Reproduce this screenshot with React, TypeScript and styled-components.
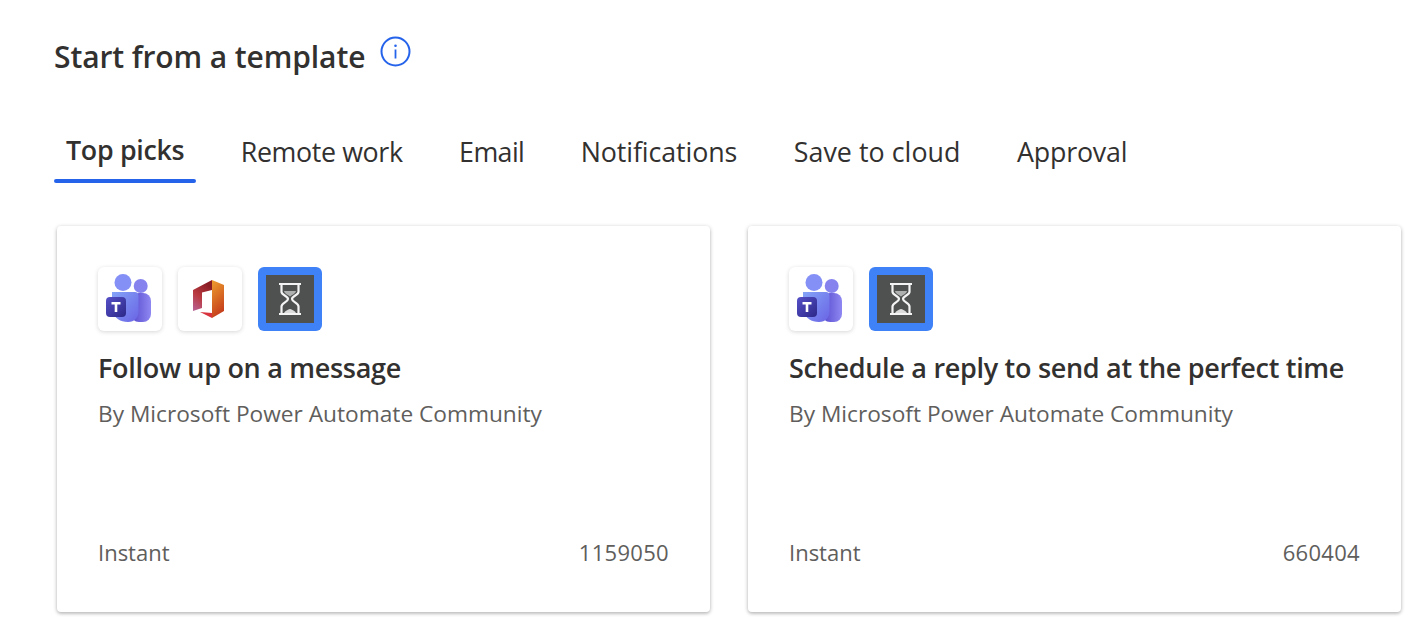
import React from 'react';
import styled, { createGlobalStyle } from 'styled-components';

const GlobalStyle = createGlobalStyle`
  html, body {
    margin: 0;
    padding: 0;
    background: #ffffff;
    overflow: hidden;
  }
  body {
    font-family: "Open Sans", "Noto Sans", "Liberation Sans", sans-serif;
  }
`;

const Page = styled.div`
  width: 1426px;
  height: 636px;
  box-sizing: border-box;
  padding: 32px 0 0 54px;
  overflow: hidden;
`;

const Heading = styled.div`
  display: flex;
  align-items: flex-start;
  gap: 15px;
  height: 52px;
`;

const Title = styled.h1`
  margin: 0;
  font-size: 30px;
  line-height: 50px;
  font-weight: 600;
  color: #323130;
  letter-spacing: -0.1px;
`;

const InfoButton = styled.span`
  display: block;
  width: 31px;
  height: 31px;
  margin-top: 4px;
  color: #2563eb;
`;

const TabRow = styled.div`
  display: flex;
  gap: 32.5px;
  margin-top: 40px;
`;

const Tab = styled.div<{ $active?: boolean; $tracking: number }>`
  position: relative;
  padding: 0 12px;
  height: 59px;
  font-size: 26.8px;
  line-height: ${(p) => (p.$active ? 52 : 56)}px;
  font-weight: ${(p) => (p.$active ? 600 : 400)};
  color: #323130;
  letter-spacing: ${(p) => p.$tracking}px;

  &::after {
    content: '';
    display: ${(p) => (p.$active ? 'block' : 'none')};
    position: absolute;
    left: 0;
    right: 0;
    bottom: 0;
    height: 4px;
    border-radius: 2px;
    background: #2563eb;
  }
`;

const CardRow = styled.div`
  display: flex;
  gap: 38px;
  margin: 43px 0 0 3px;
`;

const Card = styled.div`
  display: flex;
  flex-direction: column;
  box-sizing: border-box;
  width: 653px;
  height: 386px;
  padding: 41px 41px 44px;
  background: #ffffff;
  border-radius: 4px;
  box-shadow: 0 1px 4px rgba(0, 0, 0, 0.24), 0 2px 3px rgba(0, 0, 0, 0.1);
`;

const IconRow = styled.div`
  display: flex;
  gap: 16px;
`;

const IconTile = styled.div<{ $bg?: string }>`
  display: flex;
  align-items: center;
  justify-content: center;
  width: 64px;
  height: 64px;
  border-radius: 6px;
  background: ${(p) => p.$bg || '#ffffff'};
  box-shadow: ${(p) => (p.$bg ? 'none' : '0 1px 4px rgba(0, 0, 0, 0.16)')};
`;

const CardTitle = styled.div`
  margin-top: 18px;
  font-size: 27px;
  line-height: 38px;
  font-weight: 600;
  color: #323130;
  letter-spacing: -0.3px;
  white-space: nowrap;
`;

const Author = styled.div`
  margin-top: 11px;
  font-size: 22.7px;
  line-height: 32px;
  color: #605e5c;
  white-space: nowrap;
`;

const CardFooter = styled.div`
  display: flex;
  justify-content: space-between;
  margin-top: auto;
  font-size: 22px;
  line-height: 32px;
  color: #605e5c;
`;

const RunCount = styled.span`
  letter-spacing: 0.3px;
`;

const InfoIcon = () => (
  <svg viewBox="0 0 31 31" width="31" height="31" fill="none" stroke="currentColor">
    <circle cx="15.5" cy="15.5" r="14" strokeWidth="2" />
    <circle cx="15.5" cy="9.8" r="1.3" fill="currentColor" stroke="none" />
    <path d="M15.5 13.5v9" strokeWidth="1.8" />
  </svg>
);

const TeamsIcon = () => (
  <svg viewBox="0 0 64 64" width="64" height="64">
    <defs>
      <linearGradient id="teamsBack" x1="0" y1="0" x2="1" y2="0">
        <stop offset="0" stopColor="#5548cc" />
        <stop offset="1" stopColor="#8f88f2" />
      </linearGradient>
      <linearGradient id="teamsFront" x1="0" y1="0" x2="1" y2="1">
        <stop offset="0" stopColor="#84a4f8" />
        <stop offset="1" stopColor="#6a64e4" />
      </linearGradient>
      <linearGradient id="teamsBadge" x1="0" y1="0" x2="1" y2="1">
        <stop offset="0" stopColor="#5650c8" />
        <stop offset="1" stopColor="#2c2888" />
      </linearGradient>
    </defs>
    <circle cx="42.700" cy="19" r="7" fill="#8683ef" />
    <rect x="33" y="26" width="20" height="29" rx="8" fill="url(#teamsBack)" />
    <circle cx="25" cy="15.500" r="8.500" fill="#8490f5" />
    <path d="M14 25h23c2 0 3.500 1.500 3.500 4v16c0 5-4 10-10.500 10-8 0-13-4-16-10z" fill="url(#teamsFront)" />
    <rect x="8" y="30" width="20" height="20" rx="4" fill="url(#teamsBadge)" />
    <path d="M13.500 35h9v2.500h-3.200V45h-2.600v-7.500h-3.200z" fill="#ffffff" />
  </svg>
);

const OfficeIcon = () => (
  <svg viewBox="0 0 64 64" width="64" height="64">
    <defs>
      <linearGradient id="officeLeft" x1="0" y1="1" x2="0.5" y2="0">
        <stop offset="0" stopColor="#b8649a" />
        <stop offset="0.5" stopColor="#b93a40" />
        <stop offset="1" stopColor="#8a1c24" />
      </linearGradient>
      <linearGradient id="officeRight" x1="0" y1="0" x2="0.3" y2="1">
        <stop offset="0" stopColor="#ee9f2e" />
        <stop offset="1" stopColor="#c63f1c" />
      </linearGradient>
    </defs>
    <path d="M15 23l19-10v10l-10 2.500V41l-9 3z" fill="url(#officeLeft)" />
    <path d="M34 13l12 5v26l-12 7z" fill="url(#officeRight)" />
    <path d="M22 45l12 1v5z" fill="#d8343e" />
  </svg>
);

const DelayIcon = () => (
  <svg viewBox="0 0 64 64" width="64" height="64">
    <rect x="8" y="8" width="48" height="48" fill="#4f5150" />
    <g fill="none" stroke="#f4f4f4" strokeWidth="2.2">
      <path d="M21 17h22M21 47h22" />
      <path d="M23.500 17v8c0 3 6.500 4 6.500 7s-6.500 4-6.500 7.500V47M40.500 17v8c0 3-6.500 4-6.500 7s6.500 4 6.500 7.500V47" />
    </g>
    <path d="M26 24h12c-.5 2.500-4 4-6 5.500-2-1.500-5.500-3-6-5.500z" fill="#ffffff" opacity="0.55" />
    <path d="M26 46c1-2 4-3.500 6-4 2 .5 5 2 6 4z" fill="#ffffff" opacity="0.8" />
  </svg>
);

interface Template {
  id: string;
  title: string;
  runs: string;
  icons: React.ReactNode[];
}

const delayTile = (
  <IconTile $bg="#3f82f7">
    <DelayIcon />
  </IconTile>
);

const teamsTile = (
  <IconTile>
    <TeamsIcon />
  </IconTile>
);

const templates: Template[] = [
  {
    id: 'follow',
    title: 'Follow up on a message',
    runs: '1159050',
    icons: [teamsTile, <IconTile><OfficeIcon /></IconTile>, delayTile],
  },
  {
    id: 'schedule',
    title: 'Schedule a reply to send at the perfect time',
    runs: '660404',
    icons: [teamsTile, delayTile],
  },
];

const tabs = [
  { label: 'Top picks', tracking: -0.3 },
  { label: 'Remote work', tracking: -0.38 },
  { label: 'Email', tracking: -0.6 },
  { label: 'Notifications', tracking: -0.1 },
  { label: 'Save to cloud', tracking: 0.05 },
  { label: 'Approval', tracking: -0.2 },
];

export default function App() {
  return (
    <Page>
      <GlobalStyle />
      <Heading>
        <Title>Start from a template</Title>
        <InfoButton>
          <InfoIcon />
        </InfoButton>
      </Heading>
      <TabRow>
        {tabs.map((tab, i) => (
          <Tab key={tab.label} $active={i === 0} $tracking={tab.tracking}>
            {tab.label}
          </Tab>
        ))}
      </TabRow>
      <CardRow>
        {templates.map((t) => (
          <Card key={t.id}>
            <IconRow>
              {t.icons.map((icon, i) => (
                <React.Fragment key={i}>{icon}</React.Fragment>
              ))}
            </IconRow>
            <CardTitle>{t.title}</CardTitle>
            <Author>By Microsoft Power Automate Community</Author>
            <CardFooter>
              <span>Instant</span>
              <RunCount>{t.runs}</RunCount>
            </CardFooter>
          </Card>
        ))}
      </CardRow>
    </Page>
  );
}
